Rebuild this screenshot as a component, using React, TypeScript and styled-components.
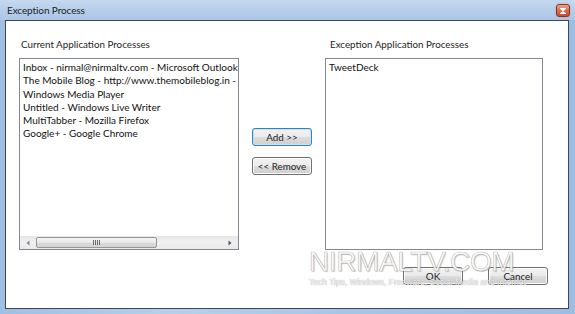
import React from "react";
import styled, { createGlobalStyle } from "styled-components";

const Global = createGlobalStyle`
  html, body { margin: 0; padding: 0; background: #ffffff; }
  body { font-family: Lato, "Open Sans", sans-serif; }
`;

const Window = styled.div`
  position: relative;
  width: 575px;
  height: 314px;
  display: flex;
  flex-direction: column;
  box-sizing: border-box;
  overflow: hidden;
  background: linear-gradient(90deg, #9fbfe3 0%, #b7cfea 30%, #a8c4e5 60%, #9ebde2 100%);
`;

const TitleBar = styled.div`
  height: 20px;
  flex: none;
  display: flex;
  align-items: center;
  justify-content: space-between;
  padding: 0 5px 0 7px;
  background: linear-gradient(180deg, #c6d9ef 0%, #b8cfeb 45%, #abc6e6 100%);
`;

const Title = styled.span`
  font-size: 10px;
  letter-spacing: -0.1px;
  color: #1e1e1e;
  line-height: 14px;
`;

const CloseButton = styled.div`
  width: 14px;
  height: 13px;
  margin-top: 1px;
  box-sizing: border-box;
  border: 1px solid #7a3a30;
  border-radius: 3px;
  background: linear-gradient(180deg, #eea68e 0%, #dc6a4c 50%, #cf4a2c 100%);
  box-shadow: 0 0 2px rgba(230, 120, 80, 0.6);
  display: flex;
  align-items: center;
  justify-content: center;
`;

const Client = styled.div`
  flex: 1;
  margin: 0 6px 5px 5px;
  border: 1px solid #3b4858;
  background: #ffffff;
  display: flex;
  flex-direction: column;
  padding: 16px 20px 0 13px;
`;

const Columns = styled.div`
  display: grid;
  grid-template-columns: 220px 86px 218px;
  grid-template-rows: 14px 192px;
  row-gap: 7px;
`;

const Label = styled.div<{ $indent: number }>`
  font-size: 9.8px;
  line-height: 14px;
  color: #1e1e1e;
  padding-left: ${(p) => p.$indent}px;
  white-space: nowrap;
`;

const ListBox = styled.div`
  border: 1px solid #828790;
  background: #ffffff;
  display: flex;
  flex-direction: column;
  overflow: hidden;
`;

const ListItems = styled.div`
  flex: 1;
  padding: 2px 0 0 3px;
  overflow: hidden;
`;

const Item = styled.div`
  font-size: 10px;
  line-height: 13.3px;
  color: #111111;
  white-space: nowrap;
`;

const HScroll = styled.div`
  height: 13px;
  flex: none;
  display: flex;
  align-items: stretch;
  background: linear-gradient(180deg, #e6e6e6 0%, #f0f0f0 50%, #e9e9e9 100%);
`;

const ScrollArrow = styled.div`
  width: 16px;
  flex: none;
  display: flex;
  align-items: center;
  justify-content: center;
`;

const Track = styled.div`
  flex: 1;
  display: flex;
  align-items: center;
`;

const Thumb = styled.div`
  height: 11px;
  box-sizing: border-box;
  border: 1px solid #979797;
  border-radius: 2px;
  background: linear-gradient(180deg, #f4f4f4 0%, #e8e8e8 50%, #d9d9d9 51%, #d4d4d4 100%);
  display: flex;
  align-items: center;
  justify-content: center;
`;

const Middle = styled.div`
  display: flex;
  flex-direction: column;
  align-items: center;
  gap: 11px;
  padding-top: 70px;
`;

const Button = styled.button<{ $focused?: boolean }>`
  width: 60px;
  height: 18px;
  padding: 0;
  box-sizing: border-box;
  border: 1px solid ${(p) => (p.$focused ? "#3c7fb1" : "#707070")};
  border-radius: 3px;
  background: linear-gradient(180deg, #f2f2f2 0%, #ebebeb 50%, #dddddd 51%, #cfcfcf 100%);
  box-shadow: inset 0 0 0 1px ${(p) => (p.$focused ? "#bfe6f8" : "#fcfcfc")};
  font-family: Lato, "Open Sans", sans-serif;
  font-size: 9.8px;
  line-height: 14px;
  color: #1e1e1e;
  display: flex;
  align-items: center;
  justify-content: center;
`;

const Footer = styled.div`
  display: flex;
  justify-content: flex-end;
  gap: 25px;
  margin-top: 17px;
`;

const Watermark = styled.div`
  position: absolute;
  left: 309px;
  top: 247px;
  pointer-events: none;
  display: flex;
  flex-direction: column;
  align-items: flex-start;
`;

const WatermarkBig = styled.div`
  font-family: "Liberation Sans", sans-serif;
  font-size: 28px;
  line-height: 30px;
  letter-spacing: -0.4px;
  color: rgba(255, 255, 255, 0.92);
  -webkit-text-stroke: 0.7px rgba(140, 140, 140, 0.55);
  text-shadow: 1px 1px 1px rgba(120, 120, 120, 0.35);
  white-space: nowrap;
`;

const WatermarkSmall = styled.div`
  font-family: "Liberation Sans", sans-serif;
  font-size: 8.5px;
  line-height: 10px;
  color: rgba(255, 255, 255, 0.9);
  text-shadow: 0 0 1px rgba(100, 100, 100, 0.8);
  white-space: nowrap;
`;

const leftItems = [
  "Inbox - nirmal@nirmaltv.com - Microsoft Outlook",
  "The Mobile Blog - http://www.themobileblog.in - Windows Live Writer",
  "Windows Media Player",
  "Untitled - Windows Live Writer",
  "MultiTabber - Mozilla Firefox",
  "Google+ - Google Chrome",
];

export default function App() {
  return (
    <>
      <Global />
      <Window>
        <TitleBar>
          <Title>Exception Process</Title>
          <CloseButton>
            <svg width="8" height="6" viewBox="0 0 8 6">
              <path d="M1 0.5 H7 M1 5.5 H7 M2.5 1 L5.5 5 M5.5 1 L2.5 5" stroke="#ffffff" strokeWidth="1.4" fill="none" />
            </svg>
          </CloseButton>
        </TitleBar>
        <Client>
          <Columns>
            <Label $indent={2}>Current Application Processes</Label>
            <div />
            <Label $indent={5}>Exception Application Processes</Label>
            <ListBox>
              <ListItems>
                {leftItems.map((t) => (
                  <Item key={t}>{t}</Item>
                ))}
              </ListItems>
              <HScroll>
                <ScrollArrow>
                  <svg width="4" height="6" viewBox="0 0 4 6">
                    <path d="M3.5 0.5 L0.5 3 L3.5 5.5 Z" fill="#8a8a8a" />
                  </svg>
                </ScrollArrow>
                <Track>
                  <Thumb style={{ width: 121 }}>
                    <svg width="7" height="5" viewBox="0 0 7 5">
                      <path d="M0.5 0 V5 M2.5 0 V5 M4.5 0 V5 M6.5 0 V5" stroke="#6a6a6a" strokeWidth="1" />
                    </svg>
                  </Thumb>
                </Track>
                <ScrollArrow>
                  <svg width="4" height="6" viewBox="0 0 4 6">
                    <path d="M0.5 0.5 L3.5 3 L0.5 5.5 Z" fill="#5a5a5a" />
                  </svg>
                </ScrollArrow>
              </HScroll>
            </ListBox>
            <Middle>
              <Button $focused>Add &gt;&gt;</Button>
              <Button>&lt;&lt; Remove</Button>
            </Middle>
            <ListBox>
              <ListItems>
                <Item>TweetDeck</Item>
              </ListItems>
            </ListBox>
          </Columns>
          <Footer>
            <Button>OK</Button>
            <Button>Cancel</Button>
          </Footer>
        </Client>
        <Watermark>
          <WatermarkBig>NIRMALTV.COM</WatermarkBig>
          <WatermarkSmall>Tech Tips, Windows, Freeware, Social Media and Internet</WatermarkSmall>
        </Watermark>
      </Window>
    </>
  );
}
